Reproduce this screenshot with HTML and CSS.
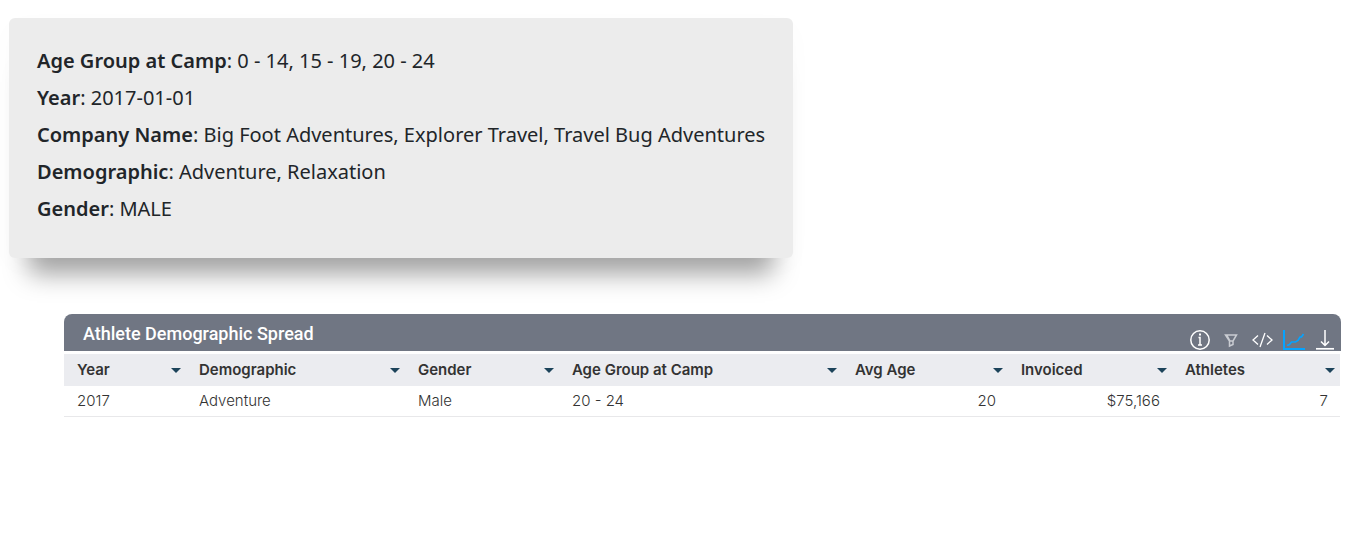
FILE: index.html
```html
<!DOCTYPE html>
<html lang="en">
<head>
<meta charset="utf-8">
<title>Athlete Demographic Spread</title>
<link rel="stylesheet" href="styles.css">
</head>
<body>
<section class="filters">
  <p><b>Age Group at Camp</b>: 0 - 14, 15 - 19, 20 - 24</p>
  <p><b>Year</b>: 2017-01-01</p>
  <p><b>Company Name</b>: Big Foot Adventures, Explorer Travel, Travel Bug Adventures</p>
  <p><b>Demographic</b>: Adventure, Relaxation</p>
  <p><b>Gender</b>: MALE</p>
</section>
<section class="report">
  <header class="bar">
    <h1>Athlete Demographic Spread</h1>
    <div class="tools">
      <button type="button" aria-label="Information"><svg width="22" height="22" viewBox="0 0 22 22"><circle cx="11" cy="11" r="9.200" stroke-width="1.500"/><path d="M9.500 8.500H11V16M9 16h4" stroke-width="1.500"/><path d="M10 5.500h2" stroke-width="2"/></svg></button>
      <button type="button" aria-label="Filter" class="dim"><svg width="20" height="22" viewBox="0 0 20 22"><path d="M4.500 6h11l-3.500 6v3.500L8.500 17v-5zM6 6.500l3 5.500M8.500 12H12" stroke-width="1.500"/></svg></button>
      <button type="button" aria-label="Code"><svg width="22" height="22" viewBox="0 0 22 22"><path d="M7 6.500L2 11l5 4.500M16 6.500l5 4.500-5 4.500M14 4L9 18" stroke-width="1.300"/></svg></button>
      <button type="button" aria-label="Chart" class="active"><svg width="22" height="22" viewBox="0 0 22 22"><path d="M1 1v19h21" stroke-width="2"/><path d="M4 16.500l2.500-1 2-2.500h4l2.500-1.500 2-3.500h1.500L20.500 5" stroke-width="1.700"/></svg></button>
      <button type="button" aria-label="Download"><svg width="20" height="22" viewBox="0 0 20 22"><path d="M10 1v15M6 12.500l4 4 4-4" stroke-width="1.500"/><path d="M1 19.800h18" stroke-width="1.700"/></svg></button>
    </div>
  </header>
  <table class="grid">
    <colgroup><col class="c-year"><col class="c-demo"><col class="c-gender"><col class="c-group"><col class="c-avg"><col class="c-invoiced"><col class="c-athletes"></colgroup>
    <thead>
      <tr>
        <th scope="col"><button type="button">Year<i class="caret"></i></button></th>
        <th scope="col"><button type="button">Demographic<i class="caret"></i></button></th>
        <th scope="col"><button type="button">Gender<i class="caret"></i></button></th>
        <th scope="col"><button type="button">Age Group at Camp<i class="caret"></i></button></th>
        <th scope="col"><button type="button">Avg Age<i class="caret"></i></button></th>
        <th scope="col"><button type="button">Invoiced<i class="caret"></i></button></th>
        <th scope="col"><button type="button">Athletes<i class="caret"></i></button></th>
      </tr>
    </thead>
    <tbody>
      <tr><td>2017</td><td>Adventure</td><td>Male</td><td>20 - 24</td><td class="num">20</td><td class="num">$75,166</td><td class="num">7</td></tr>
    </tbody>
  </table>
</section>
</body>
</html>
```
FILE: styles.css
```css
* { box-sizing: border-box; }
body { margin: 0; padding: 18px 7px 24px 9px; background: #fff; }

.filters {
  width: fit-content;
  padding: 24px 28px 31px;
  border-radius: 6px;
  background: #ececec;
  color: #212529;
  font: 20px/37px "Noto Sans", sans-serif;
  box-shadow: 0 36px 24px -20px rgba(0, 0, 0, .36), 0 8px 28px rgba(0, 0, 0, .02);
}
.filters p { margin: 0; }
.filters b { font-weight: 600; }

.report { margin: 56px 0 0 55px; }
.bar {
  display: flex;
  justify-content: space-between;
  height: 37px;
  padding: 0 6px 0 19px;
  border-radius: 8px 8px 0 0;
  background: #707683;
}
.bar h1 { margin: 0; color: #fff; font: 500 18px/39px Roboto, sans-serif; }
.tools { display: flex; align-items: flex-end; gap: 10px; }
.tools button { display: flex; padding: 0; border: 0; background: none; color: #fff; cursor: pointer; }
.tools .dim { color: #c9ccd2; }
.tools .active { color: #05a3ff; }
.tools svg { fill: none; stroke: currentColor; }

.grid {
  width: calc(100% - 1px);
  margin-top: 3px;
  border-collapse: collapse;
  table-layout: fixed;
  color: #333;
  font: 300 15px/30px Inter, sans-serif;
}
.c-year { width: 9.56%; }
.c-demo { width: 17.16%; }
.c-gender { width: 12.07%; }
.c-group { width: 22.18%; }
.c-avg { width: 13.01%; }
.c-invoiced { width: 12.85%; }
.c-athletes { width: 13.17%; }
.grid th { padding: 0; background: #ebecf0; }
.grid th button {
  display: flex;
  align-items: center;
  justify-content: space-between;
  width: 100%;
  height: 32px;
  padding: 0 5px 0 13px;
  border: 0;
  background: none;
  color: #333;
  font: 600 15px/32px Inter, sans-serif;
  white-space: nowrap;
  cursor: pointer;
}
.caret { border: 5px solid transparent; border-top-color: #1c435a; border-bottom: 0; }
.grid td { padding: 0 12px 0 13px; border-bottom: 1px solid #e8e8ea; }
.grid .num { text-align: right; }
```
